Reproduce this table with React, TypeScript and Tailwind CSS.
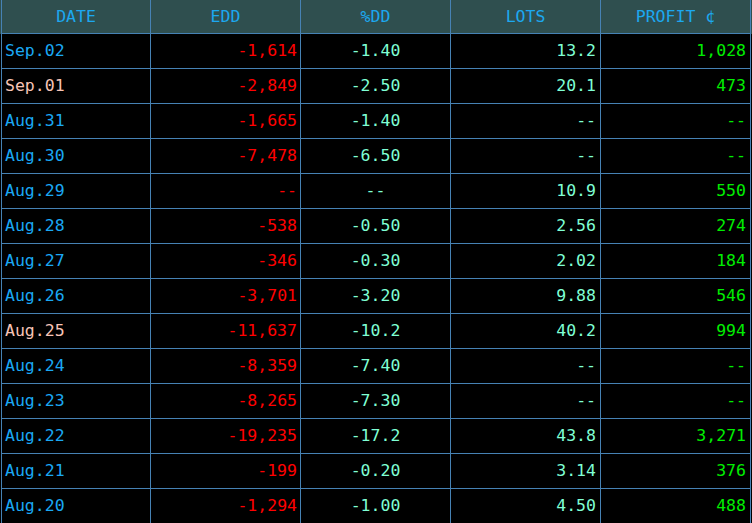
const rows: [string, string, string, string, string, boolean][] = [
    ['Sep.02', '-1,614', '-1.40', '13.2', '1,028', false],
    ['Sep.01', '-2,849', '-2.50', '20.1', '473', true],
    ['Aug.31', '-1,665', '-1.40', '--', '--', false],
    ['Aug.30', '-7,478', '-6.50', '--', '--', false],
    ['Aug.29', '--', '--', '10.9', '550', false],
    ['Aug.28', '-538', '-0.50', '2.56', '274', false],
    ['Aug.27', '-346', '-0.30', '2.02', '184', false],
    ['Aug.26', '-3,701', '-3.20', '9.88', '546', false],
    ['Aug.25', '-11,637', '-10.2', '40.2', '994', true],
    ['Aug.24', '-8,359', '-7.40', '--', '--', false],
    ['Aug.23', '-8,265', '-7.30', '--', '--', false],
    ['Aug.22', '-19,235', '-17.2', '43.8', '3,271', false],
    ['Aug.21', '-199', '-0.20', '3.14', '376', false],
    ['Aug.20', '-1,294', '-1.00', '4.50', '488', false],
]

const headers = ['DATE', 'EDD', '%DD', 'LOTS', 'PROFIT ¢']

const cell = 'w-[150px] shrink-0 border-r border-b border-[#4682b4] flex items-center pt-px'

export default function App() {
    return (
        <div
            className="w-[752px] h-[523px] overflow-hidden bg-black text-[16.5px]"
            style={{ fontFamily: '"DejaVu Sans Mono", monospace' }}
        >
            <div className="flex h-[34px] bg-[#2f4f4f] pl-px">
                {headers.map((h, i) => (
                    <div
                        key={h}
                        className={`${cell} justify-center text-[#1ca8f0] ${i === 0 ? 'border-l' : ''}`}
                    >
                        {h}
                    </div>
                ))}
            </div>
            {rows.map(([date, edd, dd, lots, profit, pink]) => (
                <div key={date} className="flex h-[35px] pl-px">
                    <div
                        className={`${cell} border-l pl-[3px] ${pink ? 'text-[#f7c4b6]' : 'text-[#1aa8f4]'}`}
                    >
                        {date}
                    </div>
                    <div className={`${cell} justify-end pr-[3px] text-[#ff0000]`}>
                        {edd}
                    </div>
                    <div className={`${cell} justify-center text-[#7fffd4]`}>
                        {dd}
                    </div>
                    <div className={`${cell} justify-end pr-[4px] text-[#7fffd4]`}>
                        {lots}
                    </div>
                    <div className={`${cell} justify-end pr-[4px] text-[#00ee00]`}>
                        {profit}
                    </div>
                </div>
            ))}
        </div>
    )
}
